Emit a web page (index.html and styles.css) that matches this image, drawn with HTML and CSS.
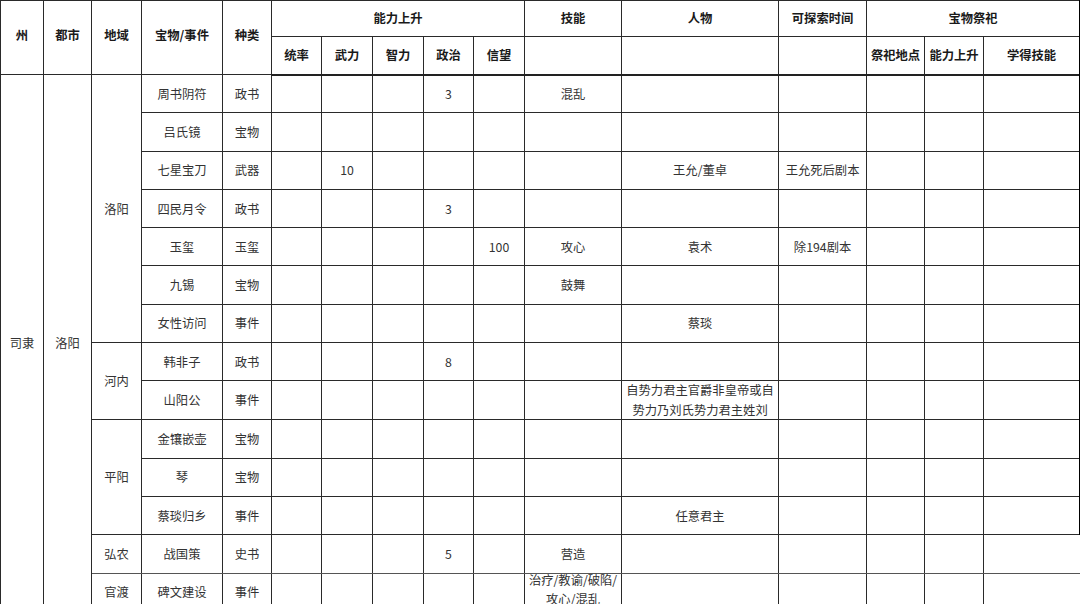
FILE: index.html
```html
<!DOCTYPE html>
<html lang="zh-CN">
<head>
<meta charset="utf-8">
<title>宝物表</title>
<link rel="stylesheet" href="styles.css">
</head>
<body>
<table class="sheet">
  <colgroup>
    <col class="w43"><col class="w48"><col class="w50"><col class="w81"><col class="w49">
    <col class="w50"><col class="w51"><col class="w51"><col class="w50"><col class="w51">
    <col class="w97"><col class="w157"><col class="w88"><col class="w58"><col class="w59"><col class="w95">
  </colgroup>
  <thead>
    <tr class="h1">
      <th rowspan="2"><div class="lift">州</div></th>
      <th rowspan="2"><div class="lift">都市</div></th>
      <th rowspan="2"><div class="lift">地域</div></th>
      <th rowspan="2"><div class="lift">宝物/事件</div></th>
      <th rowspan="2"><div class="lift">种类</div></th>
      <th colspan="5">能力上升</th>
      <th>技能</th>
      <th>人物</th>
      <th>可探索时间</th>
      <th colspan="3" class="last">宝物祭祀</th>
    </tr>
    <tr class="h2">
      <th>统率</th>
      <th>武力</th>
      <th>智力</th>
      <th>政治</th>
      <th>信望</th>
      <th></th>
      <th></th>
      <th></th>
      <th>祭祀地点</th>
      <th>能力上升</th>
      <th class="gl last">学得技能</th>
    </tr>
  </thead>
  <tbody>
    <tr>
      <td rowspan="14">司隶</td>
      <td rowspan="14">洛阳</td>
      <td rowspan="7">洛阳</td>
      <td>周书阴符</td><td>政书</td>
      <td></td><td></td><td></td><td>3</td><td></td>
      <td>混乱</td><td></td><td></td>
      <td></td><td></td><td class="gl last"></td>
    </tr>
    <tr>
      <td>吕氏镜</td><td>宝物</td>
      <td></td><td></td><td></td><td></td><td></td>
      <td></td><td></td><td></td>
      <td></td><td></td><td class="gl last"></td>
    </tr>
    <tr>
      <td>七星宝刀</td><td>武器</td>
      <td></td><td>10</td><td></td><td></td><td></td>
      <td></td><td>王允/董卓</td><td>王允死后剧本</td>
      <td></td><td></td><td class="gl last"></td>
    </tr>
    <tr>
      <td>四民月令</td><td>政书</td>
      <td></td><td></td><td></td><td>3</td><td></td>
      <td></td><td></td><td></td>
      <td></td><td></td><td class="gl last"></td>
    </tr>
    <tr>
      <td>玉玺</td><td>玉玺</td>
      <td></td><td></td><td></td><td></td><td>100</td>
      <td>攻心</td><td>袁术</td><td>除194剧本</td>
      <td></td><td></td><td class="gl last"></td>
    </tr>
    <tr>
      <td>九锡</td><td>宝物</td>
      <td></td><td></td><td></td><td></td><td></td>
      <td>鼓舞</td><td></td><td></td>
      <td></td><td></td><td class="gl last"></td>
    </tr>
    <tr>
      <td>女性访问</td><td>事件</td>
      <td></td><td></td><td></td><td></td><td></td>
      <td></td><td>蔡琰</td><td></td>
      <td></td><td></td><td class="gl last"></td>
    </tr>
    <tr>
      <td rowspan="2">河内</td>
      <td>韩非子</td><td>政书</td>
      <td></td><td></td><td></td><td>8</td><td></td>
      <td></td><td></td><td></td>
      <td></td><td></td><td class="gl last"></td>
    </tr>
    <tr>
      <td>山阳公</td><td>事件</td>
      <td></td><td></td><td></td><td></td><td></td>
      <td></td><td><div class="multi">自势力君主官爵非皇帝或自势力乃刘氏势力君主姓刘</div></td><td></td>
      <td></td><td></td><td class="gl last"></td>
    </tr>
    <tr>
      <td rowspan="3">平阳</td>
      <td>金镶嵌壶</td><td>宝物</td>
      <td></td><td></td><td></td><td></td><td></td>
      <td></td><td></td><td></td>
      <td></td><td></td><td class="gl last"></td>
    </tr>
    <tr>
      <td>琴</td><td>宝物</td>
      <td></td><td></td><td></td><td></td><td></td>
      <td></td><td></td><td></td>
      <td></td><td></td><td class="gl last"></td>
    </tr>
    <tr>
      <td>蔡琰归乡</td><td>事件</td>
      <td></td><td></td><td></td><td></td><td></td>
      <td></td><td>任意君主</td><td></td>
      <td></td><td></td><td class="gl last"></td>
    </tr>
    <tr class="fade">
      <td>弘农</td>
      <td>战国策</td><td>史书</td>
      <td></td><td></td><td></td><td>5</td><td></td>
      <td>营造</td><td></td><td></td>
      <td></td><td></td><td class="gl open"></td>
    </tr>
    <tr class="fade">
      <td>官渡</td>
      <td>碑文建设</td><td>事件</td>
      <td></td><td></td><td></td><td></td><td></td>
      <td><div class="multi up">治疗/教谕/破陷/攻心/混乱</div></td><td></td><td></td>
      <td></td><td></td><td class="gl open"></td>
    </tr>
  </tbody>
</table>
</body>
</html>
```

FILE: styles.css
```css
html, body {
  margin: 0;
  padding: 0;
  background: #ffffff;
  overflow: hidden;
}

.sheet {
  border-collapse: collapse;
  table-layout: fixed;
  width: 1080px;
  font-family: "Noto Sans CJK SC", "Noto Sans", sans-serif;
  font-size: 12.3px;
  color: #333333;
}

.w43 { width: 43px; }
.w48 { width: 48px; }
.w50 { width: 50px; }
.w81 { width: 81px; }
.w49 { width: 49px; }
.w51 { width: 51px; }
.w97 { width: 97px; }
.w157 { width: 157px; }
.w88 { width: 88px; }
.w58 { width: 58px; }
.w59 { width: 59px; }
.w95 { width: 97px; }

.sheet th,
.sheet td {
  border: 1px solid #2a2a2a;
  padding: 0;
  text-align: center;
  vertical-align: middle;
  line-height: 18px;
  white-space: normal;
  overflow: visible;
}

.sheet th {
  font-weight: bold;
  color: #1a1a1a;
}

.h1 { height: 36px; }
.h1 th { padding-bottom: 2px; }
.h2 { height: 38px; }
.h2 th { border-bottom: 2px solid #222222; }

.lift { margin-top: -3px; }

.sheet tbody tr { height: 38.3px; }

.sheet .last { border-right: 3px solid #000000; }
.sheet .gl { border-left-color: #808080; }
.sheet .open { border-right: none; }

.fade td { border-bottom-color: #555555; }

.multi {
  line-height: 20px;
  margin: -1px 0;
}

.multi.up {
  line-height: 19px;
  margin: -5px 0 0;
}
```
